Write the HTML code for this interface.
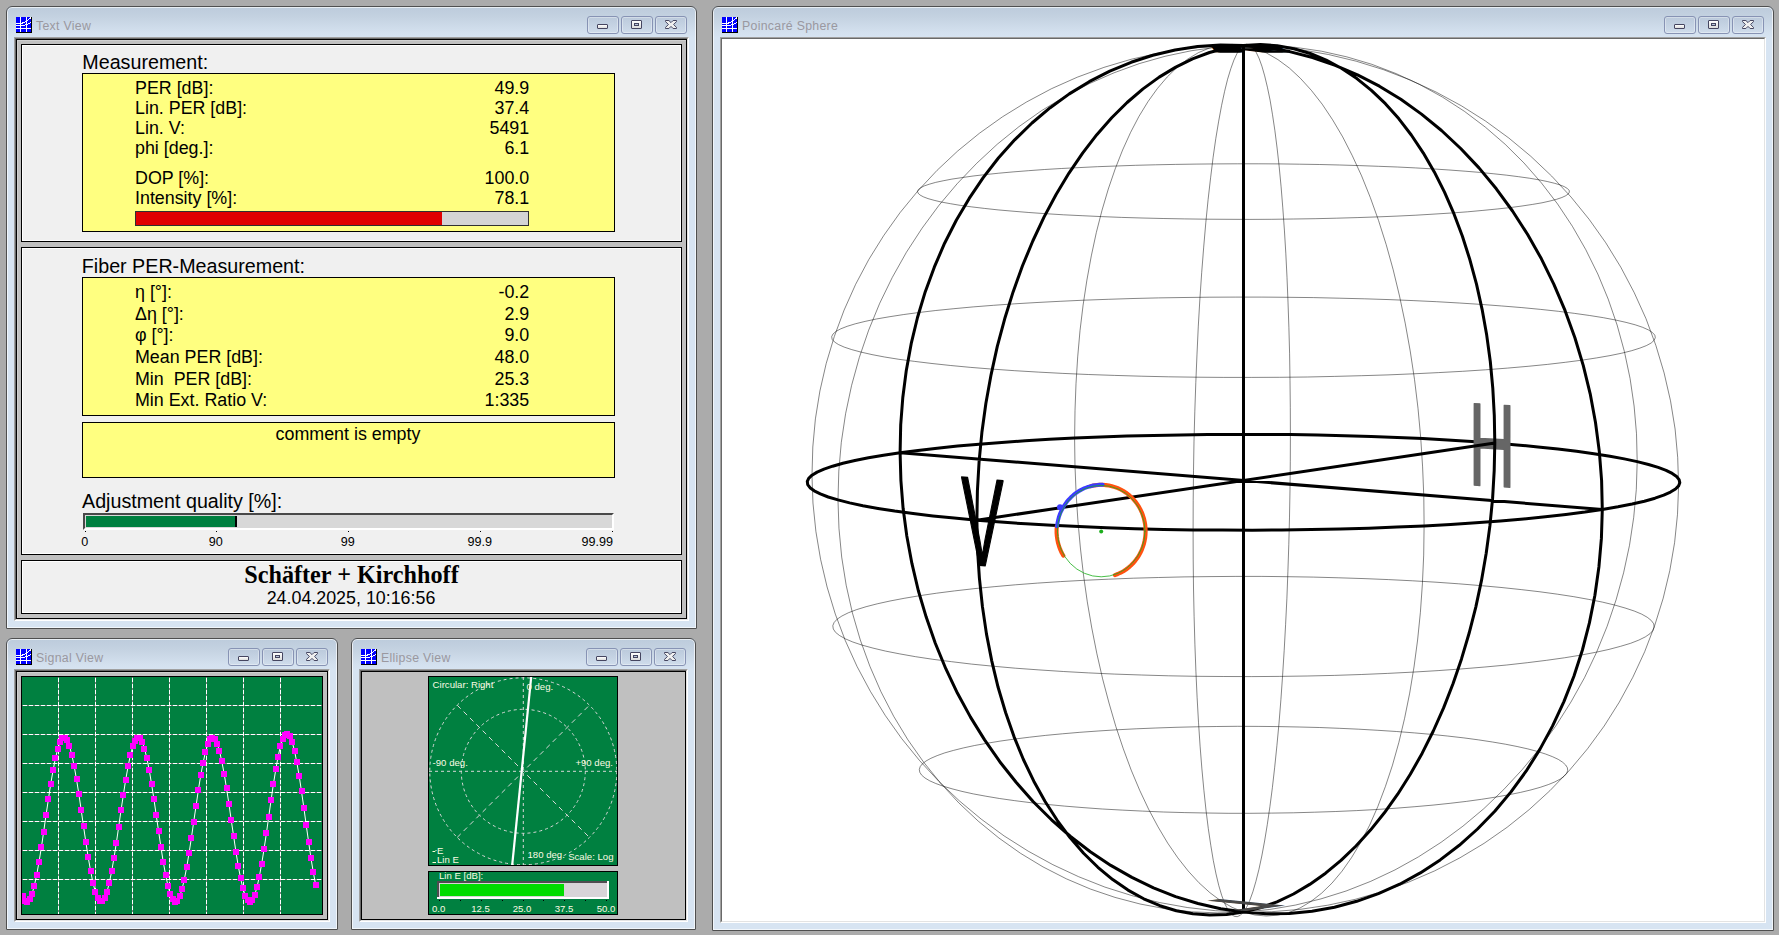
<!DOCTYPE html><html><head><meta charset="utf-8"><title>Polarization Analyzer</title><style>
html,body{margin:0;padding:0}
body{width:1779px;height:935px;overflow:hidden;background:#ababab;position:relative;font-family:"Liberation Sans",sans-serif;color:#000}
div,svg,i,b,span{position:absolute;box-sizing:border-box;display:block}
.win{background:linear-gradient(#bccbdb 0px,#c3d1e0 10px,#d3e0ee 26px,#d7e4f2 32px,#d7e4f2 100%);border-radius:6px 6px 0 0}
.frm{left:0;top:0;right:0;bottom:0;border:1px solid #4f4f4f;border-radius:6px 6px 0 0;box-shadow:inset 0 0 0 1px rgba(255,255,255,.66)}
.ico{left:10px;top:11px}
.ttl{left:30px;top:11px;height:18px;line-height:18px;font-size:12.3px;letter-spacing:.3px;color:#9a98a0;white-space:pre}
.cb{top:10px;width:32px;height:18px;border:1px solid #8793b4;border-radius:3px;background:linear-gradient(rgba(180,195,215,.55),rgba(200,213,230,.35));box-shadow:inset 0 0 0 1px rgba(255,255,255,.35)}
.gmin{left:9px;top:7px;width:11px;height:5px;border:1px solid #454560;border-radius:1px;background:linear-gradient(#fff,#dcdcdc)}
.gmax{left:9px;top:3px;width:11px;height:9px;border:1px solid #454560;border-radius:1px;background:linear-gradient(#fff,#dcdcdc)}
.gmax b{left:2px;top:2px;width:5px;height:3px;border:1px solid #454560;background:#b8c6da}
.gx{left:9px;top:3px}
.edge{left:8px;top:31px;right:8px;bottom:8px;border-style:solid;border-width:1px;border-color:#a0a0a0 #fff #fff #a0a0a0}
.client{left:0;top:0;right:0;bottom:0;border-style:solid;border-width:1px;border-color:#696969 #e3e3e3 #e3e3e3 #696969;overflow:hidden}
.inner{left:0;top:0;right:0;bottom:0;overflow:hidden}
.t{white-space:pre}
</style></head><body>
<div class="win " style="left:6px;top:6px;width:691px;height:623px">
<div class="frm"></div>
<svg class="ico" width="16" height="16" viewBox="0 0 16 16" shape-rendering="crispEdges"><rect width="16" height="16" fill="#00f"/><rect x="4" y="0" width="1" height="1" fill="#fff"/><rect x="10" y="0" width="1" height="1" fill="#fff"/><rect x="14" y="0" width="1" height="1" fill="#fff"/><rect x="15" y="0" width="1" height="1" fill="#000"/><rect x="4" y="1" width="1" height="1" fill="#fff"/><rect x="10" y="1" width="1" height="1" fill="#fff"/><rect x="13" y="1" width="2" height="1" fill="#fff"/><rect x="15" y="1" width="1" height="1" fill="#000"/><rect x="4" y="2" width="1" height="1" fill="#fff"/><rect x="10" y="2" width="1" height="1" fill="#fff"/><rect x="12" y="2" width="1" height="1" fill="#fff"/><rect x="15" y="2" width="1" height="1" fill="#000"/><rect x="4" y="3" width="1" height="1" fill="#fff"/><rect x="10" y="3" width="2" height="1" fill="#fff"/><rect x="15" y="3" width="1" height="1" fill="#000"/><rect x="4" y="4" width="1" height="1" fill="#fff"/><rect x="9" y="4" width="2" height="1" fill="#fff"/><rect x="15" y="4" width="1" height="1" fill="#000"/><rect x="4" y="5" width="1" height="1" fill="#fff"/><rect x="6" y="5" width="3" height="1" fill="#fff"/><rect x="10" y="5" width="1" height="1" fill="#fff"/><rect x="14" y="5" width="1" height="1" fill="#fff"/><rect x="15" y="5" width="1" height="1" fill="#000"/><rect x="0" y="6" width="7" height="1" fill="#fff"/><rect x="10" y="6" width="1" height="1" fill="#fff"/><rect x="12" y="6" width="2" height="1" fill="#fff"/><rect x="15" y="6" width="1" height="1" fill="#000"/><rect x="4" y="7" width="1" height="1" fill="#fff"/><rect x="9" y="7" width="3" height="1" fill="#fff"/><rect x="15" y="7" width="1" height="1" fill="#000"/><rect x="0" y="8" width="9" height="1" fill="#fff"/><rect x="10" y="8" width="1" height="1" fill="#fff"/><rect x="15" y="8" width="1" height="1" fill="#000"/><rect x="4" y="9" width="1" height="1" fill="#fff"/><rect x="10" y="9" width="1" height="1" fill="#fff"/><rect x="15" y="9" width="1" height="1" fill="#000"/><rect x="4" y="10" width="1" height="1" fill="#fff"/><rect x="10" y="10" width="1" height="1" fill="#fff"/><rect x="15" y="10" width="1" height="1" fill="#000"/><rect x="0" y="11" width="15" height="1" fill="#fff"/><rect x="15" y="11" width="1" height="1" fill="#000"/><rect x="4" y="12" width="1" height="1" fill="#fff"/><rect x="10" y="12" width="1" height="1" fill="#fff"/><rect x="15" y="12" width="1" height="1" fill="#000"/><rect x="4" y="13" width="1" height="1" fill="#fff"/><rect x="10" y="13" width="1" height="1" fill="#fff"/><rect x="15" y="13" width="1" height="1" fill="#000"/><rect x="4" y="14" width="1" height="1" fill="#fff"/><rect x="10" y="14" width="1" height="1" fill="#fff"/><rect x="15" y="14" width="1" height="1" fill="#000"/><rect x="0" y="15" width="16" height="1" fill="#000"/></svg>
<div class="ttl">Text View</div>
<div class="cb" style="right:78px"><i class="gmin"></i></div>
<div class="cb" style="right:44px"><i class="gmax"><b></b></i></div>
<div class="cb" style="right:10px"><svg class="gx" width="12" height="9" viewBox="0 0 12 9"><path d="M0.5 0.5H3.9L6 2.6L8.1 0.5H11.5V1.6L8.6 4.5L11.5 7.4V8.5H8.1L6 6.4L3.9 8.5H0.5V7.4L3.4 4.5L0.5 1.6Z" fill="#f0f0f0" stroke="#454560" stroke-width="1" stroke-linejoin="round"/></svg></div>
<div class="edge"><div class="client"><div class="inner" style="background:#c0c0c0;border:1px solid #000"></div><div style="left:1px;top:1px;width:1px;height:578px;background:#d0d0d0"></div><div style="left:1px;top:1px;width:669px;height:1px;background:#d0d0d0"></div><div style="left:5px;top:5px;width:661px;height:198px;background:#f0f0f0;border:1px solid #000;box-shadow:inset 0 0 0 1px #fff"></div><div style="left:5px;top:208px;width:661px;height:308px;background:#f0f0f0;border:1px solid #000;box-shadow:inset 0 0 0 1px #fff"></div><div style="left:5px;top:521px;width:661px;height:54px;background:#f0f0f0;border:1px solid #000;box-shadow:inset 0 0 0 1px #fff"></div><div style="left:66px;top:34px;width:533px;height:159px;background:#ffff80;border:1px solid #000"></div><div style="left:66px;top:238px;width:533px;height:139px;background:#ffff80;border:1px solid #000"></div><div style="left:66px;top:383px;width:533px;height:56px;background:#ffff80;border:1px solid #000"></div><div class="t" style="left:66.3px;top:12.17px;font-size:19.7px;line-height:22.64px;">Measurement:</div><div class="t" style="left:65.8px;top:216.17px;font-size:19.7px;line-height:22.64px;">Fiber PER-Measurement:</div><div class="t" style="left:66px;top:450.67px;font-size:19.7px;line-height:22.64px;">Adjustment quality [%]:</div><div class="t" style="left:119px;top:39.25px;font-size:17.85px;line-height:20.51px;">PER [dB]:</div><div class="t" style="right:157.79999999999995px;top:39.25px;font-size:17.85px;line-height:20.51px;text-align:right">49.9</div><div class="t" style="left:119px;top:59.25px;font-size:17.85px;line-height:20.51px;">Lin. PER [dB]:</div><div class="t" style="right:157.79999999999995px;top:59.25px;font-size:17.85px;line-height:20.51px;text-align:right">37.4</div><div class="t" style="left:119px;top:79.25px;font-size:17.85px;line-height:20.51px;">Lin. V:</div><div class="t" style="right:157.79999999999995px;top:79.25px;font-size:17.85px;line-height:20.51px;text-align:right">5491</div><div class="t" style="left:119px;top:99.25px;font-size:17.85px;line-height:20.51px;">phi [deg.]:</div><div class="t" style="right:157.79999999999995px;top:99.25px;font-size:17.85px;line-height:20.51px;text-align:right">6.1</div><div class="t" style="left:119px;top:129.25px;font-size:17.85px;line-height:20.51px;">DOP [%]:</div><div class="t" style="right:157.79999999999995px;top:129.25px;font-size:17.85px;line-height:20.51px;text-align:right">100.0</div><div class="t" style="left:119px;top:149.25px;font-size:17.85px;line-height:20.51px;">Intensity [%]:</div><div class="t" style="right:157.79999999999995px;top:149.25px;font-size:17.85px;line-height:20.51px;text-align:right">78.1</div><div class="t" style="left:119px;top:243.25px;font-size:17.85px;line-height:20.51px;">η [°]:</div><div class="t" style="right:157.79999999999995px;top:243.25px;font-size:17.85px;line-height:20.51px;text-align:right">-0.2</div><div class="t" style="left:119px;top:264.85px;font-size:17.85px;line-height:20.51px;">Δη [°]:</div><div class="t" style="right:157.79999999999995px;top:264.85px;font-size:17.85px;line-height:20.51px;text-align:right">2.9</div><div class="t" style="left:119px;top:286.45px;font-size:17.85px;line-height:20.51px;">φ [°]:</div><div class="t" style="right:157.79999999999995px;top:286.45px;font-size:17.85px;line-height:20.51px;text-align:right">9.0</div><div class="t" style="left:119px;top:308.05px;font-size:17.85px;line-height:20.51px;">Mean PER [dB]:</div><div class="t" style="right:157.79999999999995px;top:308.05px;font-size:17.85px;line-height:20.51px;text-align:right">48.0</div><div class="t" style="left:119px;top:329.65px;font-size:17.85px;line-height:20.51px;">Min  PER [dB]:</div><div class="t" style="right:157.79999999999995px;top:329.65px;font-size:17.85px;line-height:20.51px;text-align:right">25.3</div><div class="t" style="left:119px;top:351.25px;font-size:17.85px;line-height:20.51px;">Min Ext. Ratio V:</div><div class="t" style="right:157.79999999999995px;top:351.25px;font-size:17.85px;line-height:20.51px;text-align:right">1:335</div><div class="t" style="left:132px;width:400px;text-align:center;top:385.15px;font-size:17.85px;line-height:20.51px;">comment is empty</div><div style="left:119px;top:172px;width:394px;height:15px;background:#d4d4d4;border:1px solid #303030"></div><div style="left:120px;top:173px;width:306px;height:13px;background:#e00000"></div><div style="left:67px;top:474px;width:531px;height:17px;background:#d8d8d8;border-top:2px solid #484848;border-left:2px solid #484848;border-bottom:2px solid #fff;border-right:2px solid #fff"></div><div style="left:70px;top:477px;width:149px;height:11px;background:#008040"></div><div style="left:219px;top:477px;width:2px;height:11px;background:#000"></div><div style="left:69px;top:492px;width:1px;height:1px;background:#000"></div><div class="t" style="left:-131.3px;width:400px;text-align:center;top:496.10px;font-size:12.6px;line-height:14.48px;">0</div><div style="left:200px;top:492px;width:1px;height:1px;background:#000"></div><div class="t" style="left:-0.30000000000001137px;width:400px;text-align:center;top:496.10px;font-size:12.6px;line-height:14.48px;">90</div><div style="left:332px;top:492px;width:1px;height:1px;background:#000"></div><div class="t" style="left:131.7px;width:400px;text-align:center;top:496.10px;font-size:12.6px;line-height:14.48px;">99</div><div style="left:464px;top:492px;width:1px;height:1px;background:#000"></div><div class="t" style="left:263.7px;width:400px;text-align:center;top:496.10px;font-size:12.6px;line-height:14.48px;">99.9</div><div style="left:596px;top:492px;width:1px;height:1px;background:#000"></div><div class="t" style="right:74px;top:496.10px;font-size:12.6px;line-height:14.48px;text-align:right">99.99</div><div class="t" style="left:135.5px;width:400px;text-align:center;top:522.10px;font-size:24.2px;line-height:27.81px;font-family:'Liberation Serif',serif;font-weight:bold">Schäfter + Kirchhoff</div><div class="t" style="left:135px;width:400px;text-align:center;top:549.05px;font-size:17.85px;line-height:20.51px;">24.04.2025, 10:16:56</div></div></div>
</div>
<div class="win " style="left:6px;top:638px;width:332px;height:292px">
<div class="frm"></div>
<svg class="ico" width="16" height="16" viewBox="0 0 16 16" shape-rendering="crispEdges"><rect width="16" height="16" fill="#00f"/><rect x="4" y="0" width="1" height="1" fill="#fff"/><rect x="10" y="0" width="1" height="1" fill="#fff"/><rect x="14" y="0" width="1" height="1" fill="#fff"/><rect x="15" y="0" width="1" height="1" fill="#000"/><rect x="4" y="1" width="1" height="1" fill="#fff"/><rect x="10" y="1" width="1" height="1" fill="#fff"/><rect x="13" y="1" width="2" height="1" fill="#fff"/><rect x="15" y="1" width="1" height="1" fill="#000"/><rect x="4" y="2" width="1" height="1" fill="#fff"/><rect x="10" y="2" width="1" height="1" fill="#fff"/><rect x="12" y="2" width="1" height="1" fill="#fff"/><rect x="15" y="2" width="1" height="1" fill="#000"/><rect x="4" y="3" width="1" height="1" fill="#fff"/><rect x="10" y="3" width="2" height="1" fill="#fff"/><rect x="15" y="3" width="1" height="1" fill="#000"/><rect x="4" y="4" width="1" height="1" fill="#fff"/><rect x="9" y="4" width="2" height="1" fill="#fff"/><rect x="15" y="4" width="1" height="1" fill="#000"/><rect x="4" y="5" width="1" height="1" fill="#fff"/><rect x="6" y="5" width="3" height="1" fill="#fff"/><rect x="10" y="5" width="1" height="1" fill="#fff"/><rect x="14" y="5" width="1" height="1" fill="#fff"/><rect x="15" y="5" width="1" height="1" fill="#000"/><rect x="0" y="6" width="7" height="1" fill="#fff"/><rect x="10" y="6" width="1" height="1" fill="#fff"/><rect x="12" y="6" width="2" height="1" fill="#fff"/><rect x="15" y="6" width="1" height="1" fill="#000"/><rect x="4" y="7" width="1" height="1" fill="#fff"/><rect x="9" y="7" width="3" height="1" fill="#fff"/><rect x="15" y="7" width="1" height="1" fill="#000"/><rect x="0" y="8" width="9" height="1" fill="#fff"/><rect x="10" y="8" width="1" height="1" fill="#fff"/><rect x="15" y="8" width="1" height="1" fill="#000"/><rect x="4" y="9" width="1" height="1" fill="#fff"/><rect x="10" y="9" width="1" height="1" fill="#fff"/><rect x="15" y="9" width="1" height="1" fill="#000"/><rect x="4" y="10" width="1" height="1" fill="#fff"/><rect x="10" y="10" width="1" height="1" fill="#fff"/><rect x="15" y="10" width="1" height="1" fill="#000"/><rect x="0" y="11" width="15" height="1" fill="#fff"/><rect x="15" y="11" width="1" height="1" fill="#000"/><rect x="4" y="12" width="1" height="1" fill="#fff"/><rect x="10" y="12" width="1" height="1" fill="#fff"/><rect x="15" y="12" width="1" height="1" fill="#000"/><rect x="4" y="13" width="1" height="1" fill="#fff"/><rect x="10" y="13" width="1" height="1" fill="#fff"/><rect x="15" y="13" width="1" height="1" fill="#000"/><rect x="4" y="14" width="1" height="1" fill="#fff"/><rect x="10" y="14" width="1" height="1" fill="#fff"/><rect x="15" y="14" width="1" height="1" fill="#000"/><rect x="0" y="15" width="16" height="1" fill="#000"/></svg>
<div class="ttl">Signal View</div>
<div class="cb" style="right:78px"><i class="gmin"></i></div>
<div class="cb" style="right:44px"><i class="gmax"><b></b></i></div>
<div class="cb" style="right:10px"><svg class="gx" width="12" height="9" viewBox="0 0 12 9"><path d="M0.5 0.5H3.9L6 2.6L8.1 0.5H11.5V1.6L8.6 4.5L11.5 7.4V8.5H8.1L6 6.4L3.9 8.5H0.5V7.4L3.4 4.5L0.5 1.6Z" fill="#f0f0f0" stroke="#454560" stroke-width="1" stroke-linejoin="round"/></svg></div>
<div class="edge"><div class="client"><div class="inner" style="background:#c0c0c0;border:1px solid #000"></div><div style="left:1px;top:1px;width:1px;height:247px;background:#d0d0d0"></div><div style="left:1px;top:1px;width:310px;height:1px;background:#d0d0d0"></div><svg style="left:5px;top:5px" width="302" height="239" viewBox="21 676 302 239"><rect x="21.5" y="676.5" width="301" height="238" fill="#008040" stroke="#000" stroke-width="1"/><path d="M58.5 677V914M95.5 677V914M132.5 677V914M169.5 677V914M206.5 677V914M243.5 677V914M280.5 677V914M22 705.5H322M22 734.5H322M22 763.5H322M22 792.5H322M22 821.5H322M22 850.5H322M22 879.5H322" stroke="#808080" stroke-width="1" fill="none" shape-rendering="crispEdges"/><path d="M58.5 677V914M95.5 677V914M132.5 677V914M169.5 677V914M206.5 677V914M243.5 677V914M280.5 677V914M22 705.5H322M22 734.5H322M22 763.5H322M22 792.5H322M22 821.5H322M22 850.5H322M22 879.5H322" stroke="#fff" stroke-width="1" fill="none" stroke-dasharray="4 2" stroke-dashoffset="5" shape-rendering="crispEdges"/><clipPath id="pc"><rect x="22" y="677" width="300" height="237"/></clipPath><g clip-path="url(#pc)"><polyline fill="none" stroke="#fff" stroke-width="1" points="22.6,896.4 24.9,900.5 27.3,901.5 29.6,899.3 32.0,894.0 34.3,885.8 36.7,874.9 39.0,861.9 41.4,847.3 43.7,831.5 46.0,815.3 48.4,799.3 50.7,784.0 53.1,770.2 55.4,758.3 57.8,748.8 60.1,742.0 62.4,738.3 64.8,737.8 67.1,740.5 69.5,746.2 71.8,754.9 74.2,766.1 76.5,779.4 78.9,794.2 81.2,810.1 83.5,826.3 85.9,842.3 88.2,857.3 90.6,870.9 92.9,882.5 95.3,891.7 97.6,897.9 100.0,901.2 102.3,901.2 104.6,898.1 107.0,891.8 109.3,882.8 111.7,871.2 114.0,857.7 116.4,842.6 118.7,826.7 121.0,810.4 123.4,794.6 125.7,779.7 128.1,766.4 130.4,755.1 132.8,746.4 135.1,740.6 137.5,737.8 139.8,738.3 142.1,741.9 144.5,748.6 146.8,758.0 149.2,769.9 151.5,783.7 153.9,798.9 156.2,815.0 158.6,831.2 160.9,846.9 163.2,861.6 165.6,874.7 167.9,885.6 170.3,893.9 172.6,899.3 175.0,901.5 177.3,900.6 179.6,896.5 182.0,889.4 184.3,879.5 186.7,867.3 189.0,853.3 191.4,837.9 193.7,821.8 196.1,805.6 198.4,789.9 200.7,775.5 203.1,762.7 205.4,752.2 207.8,744.3 210.1,739.4 212.5,737.6 214.8,739.0 217.2,743.6 219.5,751.2 221.8,761.4 224.2,773.9 226.5,788.2 228.9,803.7 231.2,819.9 233.6,836.0 235.9,851.5 238.2,865.8 240.6,878.2 242.9,888.4 245.3,895.9 247.6,900.4 250.0,901.7 252.3,899.9 254.7,895.0 257.0,887.1 259.3,876.6 261.7,863.9 264.0,849.3 266.4,833.4 268.7,816.8 271.1,800.1 273.4,784.1 275.8,769.4 278.1,756.6 280.4,746.3 282.8,738.9 285.1,734.6 287.5,733.8 289.8,736.2 292.2,742.0 294.5,750.8 296.8,762.3 299.2,776.0 301.5,791.5 303.9,808.0 306.2,825.0 308.6,841.8 310.9,857.8 313.3,872.2 315.6,884.6"/><path fill="#f0f" shape-rendering="crispEdges" d="M20 893h6v6h-6zM22 898h6v6h-6zM24 899h6v6h-6zM27 896h6v6h-6zM29 891h6v6h-6zM31 883h6v6h-6zM34 872h6v6h-6zM36 859h6v6h-6zM38 844h6v6h-6zM41 829h6v6h-6zM43 812h6v6h-6zM45 796h6v6h-6zM48 781h6v6h-6zM50 767h6v6h-6zM52 755h6v6h-6zM55 746h6v6h-6zM57 739h6v6h-6zM59 735h6v6h-6zM62 735h6v6h-6zM64 737h6v6h-6zM66 743h6v6h-6zM69 752h6v6h-6zM71 763h6v6h-6zM74 776h6v6h-6zM76 791h6v6h-6zM78 807h6v6h-6zM81 823h6v6h-6zM83 839h6v6h-6zM85 854h6v6h-6zM88 868h6v6h-6zM90 880h6v6h-6zM92 889h6v6h-6zM95 895h6v6h-6zM97 898h6v6h-6zM99 898h6v6h-6zM102 895h6v6h-6zM104 889h6v6h-6zM106 880h6v6h-6zM109 868h6v6h-6zM111 855h6v6h-6zM113 840h6v6h-6zM116 824h6v6h-6zM118 807h6v6h-6zM120 792h6v6h-6zM123 777h6v6h-6zM125 763h6v6h-6zM127 752h6v6h-6zM130 743h6v6h-6zM132 738h6v6h-6zM134 735h6v6h-6zM137 735h6v6h-6zM139 739h6v6h-6zM141 746h6v6h-6zM144 755h6v6h-6zM146 767h6v6h-6zM149 781h6v6h-6zM151 796h6v6h-6zM153 812h6v6h-6zM156 828h6v6h-6zM158 844h6v6h-6zM160 859h6v6h-6zM163 872h6v6h-6zM165 883h6v6h-6zM167 891h6v6h-6zM170 896h6v6h-6zM172 899h6v6h-6zM174 898h6v6h-6zM177 893h6v6h-6zM179 886h6v6h-6zM181 877h6v6h-6zM184 864h6v6h-6zM186 850h6v6h-6zM188 835h6v6h-6zM191 819h6v6h-6zM193 803h6v6h-6zM195 787h6v6h-6zM198 772h6v6h-6zM200 760h6v6h-6zM202 749h6v6h-6zM205 741h6v6h-6zM207 736h6v6h-6zM209 735h6v6h-6zM212 736h6v6h-6zM214 741h6v6h-6zM216 748h6v6h-6zM219 758h6v6h-6zM221 771h6v6h-6zM224 785h6v6h-6zM226 801h6v6h-6zM228 817h6v6h-6zM231 833h6v6h-6zM233 849h6v6h-6zM235 863h6v6h-6zM238 875h6v6h-6zM240 885h6v6h-6zM242 893h6v6h-6zM245 897h6v6h-6zM247 899h6v6h-6zM249 897h6v6h-6zM252 892h6v6h-6zM254 884h6v6h-6zM256 874h6v6h-6zM259 861h6v6h-6zM261 846h6v6h-6zM263 830h6v6h-6zM266 814h6v6h-6zM268 797h6v6h-6zM270 781h6v6h-6zM273 766h6v6h-6zM275 754h6v6h-6zM277 743h6v6h-6zM280 736h6v6h-6zM282 732h6v6h-6zM284 731h6v6h-6zM287 733h6v6h-6zM289 739h6v6h-6zM292 748h6v6h-6zM294 759h6v6h-6zM296 773h6v6h-6zM299 788h6v6h-6zM301 805h6v6h-6zM303 822h6v6h-6zM306 839h6v6h-6zM308 855h6v6h-6zM310 869h6v6h-6zM313 882h6v6h-6z"/></g></svg></div></div>
</div>
<div class="win " style="left:351px;top:638px;width:345px;height:292px">
<div class="frm"></div>
<svg class="ico" width="16" height="16" viewBox="0 0 16 16" shape-rendering="crispEdges"><rect width="16" height="16" fill="#00f"/><rect x="4" y="0" width="1" height="1" fill="#fff"/><rect x="10" y="0" width="1" height="1" fill="#fff"/><rect x="14" y="0" width="1" height="1" fill="#fff"/><rect x="15" y="0" width="1" height="1" fill="#000"/><rect x="4" y="1" width="1" height="1" fill="#fff"/><rect x="10" y="1" width="1" height="1" fill="#fff"/><rect x="13" y="1" width="2" height="1" fill="#fff"/><rect x="15" y="1" width="1" height="1" fill="#000"/><rect x="4" y="2" width="1" height="1" fill="#fff"/><rect x="10" y="2" width="1" height="1" fill="#fff"/><rect x="12" y="2" width="1" height="1" fill="#fff"/><rect x="15" y="2" width="1" height="1" fill="#000"/><rect x="4" y="3" width="1" height="1" fill="#fff"/><rect x="10" y="3" width="2" height="1" fill="#fff"/><rect x="15" y="3" width="1" height="1" fill="#000"/><rect x="4" y="4" width="1" height="1" fill="#fff"/><rect x="9" y="4" width="2" height="1" fill="#fff"/><rect x="15" y="4" width="1" height="1" fill="#000"/><rect x="4" y="5" width="1" height="1" fill="#fff"/><rect x="6" y="5" width="3" height="1" fill="#fff"/><rect x="10" y="5" width="1" height="1" fill="#fff"/><rect x="14" y="5" width="1" height="1" fill="#fff"/><rect x="15" y="5" width="1" height="1" fill="#000"/><rect x="0" y="6" width="7" height="1" fill="#fff"/><rect x="10" y="6" width="1" height="1" fill="#fff"/><rect x="12" y="6" width="2" height="1" fill="#fff"/><rect x="15" y="6" width="1" height="1" fill="#000"/><rect x="4" y="7" width="1" height="1" fill="#fff"/><rect x="9" y="7" width="3" height="1" fill="#fff"/><rect x="15" y="7" width="1" height="1" fill="#000"/><rect x="0" y="8" width="9" height="1" fill="#fff"/><rect x="10" y="8" width="1" height="1" fill="#fff"/><rect x="15" y="8" width="1" height="1" fill="#000"/><rect x="4" y="9" width="1" height="1" fill="#fff"/><rect x="10" y="9" width="1" height="1" fill="#fff"/><rect x="15" y="9" width="1" height="1" fill="#000"/><rect x="4" y="10" width="1" height="1" fill="#fff"/><rect x="10" y="10" width="1" height="1" fill="#fff"/><rect x="15" y="10" width="1" height="1" fill="#000"/><rect x="0" y="11" width="15" height="1" fill="#fff"/><rect x="15" y="11" width="1" height="1" fill="#000"/><rect x="4" y="12" width="1" height="1" fill="#fff"/><rect x="10" y="12" width="1" height="1" fill="#fff"/><rect x="15" y="12" width="1" height="1" fill="#000"/><rect x="4" y="13" width="1" height="1" fill="#fff"/><rect x="10" y="13" width="1" height="1" fill="#fff"/><rect x="15" y="13" width="1" height="1" fill="#000"/><rect x="4" y="14" width="1" height="1" fill="#fff"/><rect x="10" y="14" width="1" height="1" fill="#fff"/><rect x="15" y="14" width="1" height="1" fill="#000"/><rect x="0" y="15" width="16" height="1" fill="#000"/></svg>
<div class="ttl">Ellipse View</div>
<div class="cb" style="right:78px"><i class="gmin"></i></div>
<div class="cb" style="right:44px"><i class="gmax"><b></b></i></div>
<div class="cb" style="right:10px"><svg class="gx" width="12" height="9" viewBox="0 0 12 9"><path d="M0.5 0.5H3.9L6 2.6L8.1 0.5H11.5V1.6L8.6 4.5L11.5 7.4V8.5H8.1L6 6.4L3.9 8.5H0.5V7.4L3.4 4.5L0.5 1.6Z" fill="#f0f0f0" stroke="#454560" stroke-width="1" stroke-linejoin="round"/></svg></div>
<div class="edge"><div class="client"><div class="inner" style="background:#c0c0c0;border:1px solid #000"></div><svg style="left:0;top:0" width="325" height="249" viewBox="361 671 325 249" font-family="Liberation Sans, sans-serif" font-size="9.6"><rect x="428.5" y="676.5" width="189" height="189" fill="#008040" stroke="#000"/><rect x="428.5" y="871.5" width="189" height="43" fill="#008040" stroke="#000"/><clipPath id="ec"><rect x="429" y="677" width="188" height="188"/></clipPath><g clip-path="url(#ec)" fill="none" stroke="#d8d8d8" stroke-width="1" stroke-dasharray="3 3"><circle cx="523.3" cy="771.3" r="93.5"/><circle cx="523.3" cy="771.3" r="62"/><path d="M429 771.3H617M523.3 677V865"/><path d="M457.2 705.2L589.4 837.4M457.2 837.4L589.4 705.2" stroke-dasharray="5 4"/></g><g clip-path="url(#ec)"><path d="M531.3 676L512.2 865" stroke="#fff" stroke-width="2.2" fill="none"/></g><g fill="#fbfbe4"><text x="432.6" y="688">Circular: Right</text><text x="526.5" y="689.6">0 deg.</text><text x="432.6" y="765.8">-90 deg.</text><text x="613" y="765.8" text-anchor="end">+90 deg.</text><text x="527.5" y="857.6">180 deg.</text><text x="613.5" y="859.5" text-anchor="end">Scale: Log</text><text x="437" y="853.5">E</text><text x="437" y="862.8">Lin E</text><text x="439" y="879.4">Lin E [dB]:</text><text x="438.7" y="911.6" text-anchor="middle">0.0</text><text x="480.5" y="911.6" text-anchor="middle">12.5</text><text x="522" y="911.6" text-anchor="middle">25.0</text><text x="564" y="911.6" text-anchor="middle">37.5</text><text x="606" y="911.6" text-anchor="middle">50.0</text></g><path d="M432.5 851.5h2.5l1.5 -1.5M432.5 862.5h3.5" stroke="#ffffd8" stroke-width="1" fill="none"/><g shape-rendering="crispEdges"><rect x="437" y="881" width="172" height="18" fill="#fff"/><rect x="437" y="881" width="170" height="16" fill="#504c50"/><rect x="439" y="883" width="168" height="14" fill="#d8d4d8"/><rect x="440" y="884" width="124" height="12" fill="#00dc00"/><rect x="439" y="900" width="1" height="1" fill="#000"/><rect x="460" y="900" width="1" height="1" fill="#000"/><rect x="481" y="900" width="1" height="1" fill="#000"/><rect x="502" y="900" width="1" height="1" fill="#000"/><rect x="523" y="900" width="1" height="1" fill="#000"/><rect x="543" y="900" width="1" height="1" fill="#000"/><rect x="564" y="900" width="1" height="1" fill="#000"/><rect x="585" y="900" width="1" height="1" fill="#000"/><rect x="606" y="900" width="1" height="1" fill="#000"/></g></svg></div></div>
</div>
<div class="win " style="left:712px;top:6px;width:1062px;height:925px">
<div class="frm"></div>
<svg class="ico" width="16" height="16" viewBox="0 0 16 16" shape-rendering="crispEdges"><rect width="16" height="16" fill="#00f"/><rect x="4" y="0" width="1" height="1" fill="#fff"/><rect x="10" y="0" width="1" height="1" fill="#fff"/><rect x="14" y="0" width="1" height="1" fill="#fff"/><rect x="15" y="0" width="1" height="1" fill="#000"/><rect x="4" y="1" width="1" height="1" fill="#fff"/><rect x="10" y="1" width="1" height="1" fill="#fff"/><rect x="13" y="1" width="2" height="1" fill="#fff"/><rect x="15" y="1" width="1" height="1" fill="#000"/><rect x="4" y="2" width="1" height="1" fill="#fff"/><rect x="10" y="2" width="1" height="1" fill="#fff"/><rect x="12" y="2" width="1" height="1" fill="#fff"/><rect x="15" y="2" width="1" height="1" fill="#000"/><rect x="4" y="3" width="1" height="1" fill="#fff"/><rect x="10" y="3" width="2" height="1" fill="#fff"/><rect x="15" y="3" width="1" height="1" fill="#000"/><rect x="4" y="4" width="1" height="1" fill="#fff"/><rect x="9" y="4" width="2" height="1" fill="#fff"/><rect x="15" y="4" width="1" height="1" fill="#000"/><rect x="4" y="5" width="1" height="1" fill="#fff"/><rect x="6" y="5" width="3" height="1" fill="#fff"/><rect x="10" y="5" width="1" height="1" fill="#fff"/><rect x="14" y="5" width="1" height="1" fill="#fff"/><rect x="15" y="5" width="1" height="1" fill="#000"/><rect x="0" y="6" width="7" height="1" fill="#fff"/><rect x="10" y="6" width="1" height="1" fill="#fff"/><rect x="12" y="6" width="2" height="1" fill="#fff"/><rect x="15" y="6" width="1" height="1" fill="#000"/><rect x="4" y="7" width="1" height="1" fill="#fff"/><rect x="9" y="7" width="3" height="1" fill="#fff"/><rect x="15" y="7" width="1" height="1" fill="#000"/><rect x="0" y="8" width="9" height="1" fill="#fff"/><rect x="10" y="8" width="1" height="1" fill="#fff"/><rect x="15" y="8" width="1" height="1" fill="#000"/><rect x="4" y="9" width="1" height="1" fill="#fff"/><rect x="10" y="9" width="1" height="1" fill="#fff"/><rect x="15" y="9" width="1" height="1" fill="#000"/><rect x="4" y="10" width="1" height="1" fill="#fff"/><rect x="10" y="10" width="1" height="1" fill="#fff"/><rect x="15" y="10" width="1" height="1" fill="#000"/><rect x="0" y="11" width="15" height="1" fill="#fff"/><rect x="15" y="11" width="1" height="1" fill="#000"/><rect x="4" y="12" width="1" height="1" fill="#fff"/><rect x="10" y="12" width="1" height="1" fill="#fff"/><rect x="15" y="12" width="1" height="1" fill="#000"/><rect x="4" y="13" width="1" height="1" fill="#fff"/><rect x="10" y="13" width="1" height="1" fill="#fff"/><rect x="15" y="13" width="1" height="1" fill="#000"/><rect x="4" y="14" width="1" height="1" fill="#fff"/><rect x="10" y="14" width="1" height="1" fill="#fff"/><rect x="15" y="14" width="1" height="1" fill="#000"/><rect x="0" y="15" width="16" height="1" fill="#000"/></svg>
<div class="ttl">Poincaré Sphere</div>
<div class="cb" style="right:78px"><i class="gmin"></i></div>
<div class="cb" style="right:44px"><i class="gmax"><b></b></i></div>
<div class="cb" style="right:10px"><svg class="gx" width="12" height="9" viewBox="0 0 12 9"><path d="M0.5 0.5H3.9L6 2.6L8.1 0.5H11.5V1.6L8.6 4.5L11.5 7.4V8.5H8.1L6 6.4L3.9 8.5H0.5V7.4L3.4 4.5L0.5 1.6Z" fill="#f0f0f0" stroke="#454560" stroke-width="1" stroke-linejoin="round"/></svg></div>
<div class="edge"><div class="client"><div class="inner" style="background:#fff"></div><svg style="left:0;top:0" width="1042" height="882" viewBox="722 39 1042 882" fill="none" stroke-linejoin="round" stroke-linecap="round"><path d="M1290.4 434.6L1290.3 407.4L1290.0 380.4L1289.6 353.8L1288.9 327.7L1288.0 302.1L1287.0 277.3L1285.8 253.2L1284.4 230.1L1282.8 207.9L1281.1 186.8L1279.2 166.8L1277.1 148.1L1274.9 130.7L1272.5 114.7L1270.1 100.2L1267.4 87.2L1264.7 75.9L1261.9 66.2L1259.0 58.2L1256.0 52.0L1253.0 47.5L1249.8 45.0L1246.7 44.2L1243.5 45.4L1240.3 48.4L1237.1 53.3L1233.9 60.1L1230.8 68.7L1227.6 79.2L1224.6 91.4L1221.6 105.4L1218.7 121.1L1215.8 138.5L1213.1 157.4L1210.6 177.8L1208.1 199.6L1205.8 222.7L1203.7 247.1L1201.7 272.5L1199.9 298.9L1198.3 326.1L1197.0 354.1L1195.8 382.7L1194.8 411.8L1194.0 441.1L1193.5 470.7L1193.2 500.3L1193.1 529.9L1193.2 559.1L1193.5 588.0L1194.1 616.4L1194.9 644.2L1195.9 671.2L1197.1 697.3L1198.5 722.3L1200.1 746.2L1201.9 768.9L1203.9 790.3L1206.0 810.2L1208.3 828.6L1210.8 845.4L1213.3 860.5L1216.0 873.9L1218.8 885.6L1221.7 895.4L1224.7 903.4L1227.8 909.5L1230.9 913.8L1234.0 916.2L1237.2 916.7L1240.3 915.3L1243.5 912.1L1246.7 907.1L1249.8 900.3L1252.9 891.7L1255.9 881.4L1258.9 869.5L1261.8 856.0L1264.6 841.0L1267.3 824.5L1269.9 806.7L1272.4 787.5L1274.7 767.2L1276.9 745.7L1279.0 723.2L1280.9 699.7L1282.6 675.4L1284.2 650.3L1285.6 624.5L1286.9 598.3L1287.9 571.5L1288.8 544.4L1289.5 517.1L1290.0 489.6L1290.3 462.1ZM1074.6 438.1L1075.0 410.7L1076.0 383.7L1077.7 356.9L1080.0 330.7L1083.1 305.1L1086.9 280.1L1091.3 255.9L1096.3 232.6L1102.0 210.3L1108.3 189.0L1115.2 168.9L1122.6 150.0L1130.6 132.4L1139.0 116.3L1148.0 101.6L1157.4 88.5L1167.2 77.0L1177.3 67.1L1187.8 59.0L1198.5 52.6L1209.5 48.0L1220.7 45.3L1232.1 44.4L1243.5 45.4L1255.0 48.2L1266.5 53.0L1277.9 59.6L1289.3 68.0L1300.4 78.3L1311.4 90.4L1322.2 104.2L1332.6 119.8L1342.7 136.9L1352.3 155.7L1361.6 175.9L1370.3 197.5L1378.5 220.4L1386.2 244.6L1393.2 269.8L1399.5 296.0L1405.2 323.1L1410.2 350.9L1414.5 379.4L1418.0 408.3L1420.7 437.5L1422.6 466.9L1423.8 496.4L1424.1 525.9L1423.7 555.1L1422.4 583.9L1420.4 612.3L1417.6 640.0L1414.0 667.0L1409.7 693.1L1404.6 718.3L1398.9 742.3L1392.5 765.1L1385.4 786.5L1377.8 806.6L1369.6 825.2L1360.8 842.2L1351.6 857.5L1342.0 871.2L1332.0 883.1L1321.6 893.2L1310.9 901.5L1300.0 908.0L1288.9 912.5L1277.6 915.2L1266.3 916.0L1254.9 915.0L1243.5 912.1L1232.2 907.4L1220.9 900.9L1209.8 892.6L1198.9 882.7L1188.2 871.0L1177.8 857.8L1167.7 843.1L1158.0 826.8L1148.6 809.2L1139.7 790.3L1131.2 770.1L1123.3 748.8L1115.8 726.4L1109.0 703.0L1102.6 678.8L1096.9 653.8L1091.8 628.1L1087.3 601.9L1083.5 575.1L1080.4 548.0L1077.9 520.7L1076.1 493.2L1075.0 465.6ZM812.0 475.2L812.8 447.0L815.4 418.9L819.9 391.0L826.2 363.5L834.3 336.5L844.1 310.1L855.6 284.4L868.8 259.5L883.7 235.6L900.0 212.7L917.9 190.9L937.1 170.3L957.7 151.0L979.5 133.2L1002.5 116.8L1026.5 102.0L1051.5 88.7L1077.3 77.2L1103.9 67.4L1131.0 59.3L1158.7 53.1L1186.7 48.6L1215.1 46.1L1243.5 45.4L1272.0 46.5L1300.3 49.6L1328.4 54.5L1356.2 61.2L1383.5 69.7L1410.2 80.0L1436.2 92.1L1461.4 105.8L1485.6 121.1L1508.8 138.0L1530.8 156.3L1551.7 176.1L1571.1 197.1L1589.2 219.4L1605.8 242.8L1620.8 267.2L1634.2 292.6L1646.0 318.7L1655.9 345.5L1664.1 372.9L1670.5 400.8L1675.1 429.0L1677.7 457.4L1678.6 485.9L1677.5 514.3L1674.6 542.6L1669.8 570.6L1663.2 598.2L1654.8 625.2L1644.7 651.7L1632.8 677.3L1619.3 702.1L1604.2 726.0L1587.5 748.8L1569.4 770.4L1549.9 790.7L1529.1 809.7L1507.1 827.3L1484.0 843.4L1459.8 857.9L1434.8 870.8L1408.9 882.0L1382.4 891.5L1355.3 899.3L1327.8 905.2L1299.9 909.4L1271.7 911.7L1243.5 912.1L1215.3 910.7L1187.2 907.5L1159.4 902.5L1131.9 895.6L1104.9 887.1L1078.6 876.7L1052.9 864.7L1028.1 851.1L1004.1 835.9L981.2 819.1L959.5 801.0L938.9 781.4L919.6 760.6L901.7 738.6L885.3 715.5L870.4 691.4L857.0 666.4L845.3 640.6L835.3 614.1L827.1 587.0L820.6 559.4L815.9 531.5L813.0 503.4ZM838.0 499.9L838.8 471.1L841.3 442.3L845.6 413.7L851.6 385.4L859.3 357.5L868.7 330.1L879.7 303.3L892.3 277.4L906.4 252.3L922.0 228.3L938.9 205.4L957.2 183.7L976.7 163.3L997.3 144.2L1018.9 126.7L1041.5 110.7L1065.0 96.4L1089.2 83.7L1114.0 72.8L1139.3 63.6L1165.0 56.3L1191.0 50.8L1217.2 47.1L1243.5 45.4L1269.7 45.5L1295.8 47.4L1321.5 51.2L1346.9 56.9L1371.8 64.3L1396.1 73.6L1419.7 84.5L1442.5 97.1L1464.4 111.3L1485.3 127.1L1505.2 144.3L1523.9 162.9L1541.4 182.9L1557.6 204.0L1572.4 226.3L1585.8 249.7L1597.8 274.0L1608.2 299.1L1617.1 325.0L1624.4 351.5L1630.1 378.6L1634.1 406.0L1636.5 433.7L1637.2 461.6L1636.3 489.6L1633.7 517.5L1629.5 545.3L1623.6 572.8L1616.1 599.8L1607.1 626.4L1596.5 652.4L1584.5 677.7L1570.9 702.1L1556.0 725.6L1539.8 748.2L1522.3 769.5L1503.6 789.7L1483.8 808.7L1462.9 826.2L1441.1 842.3L1418.4 856.9L1395.0 869.9L1370.8 881.3L1346.1 891.0L1320.9 898.9L1295.3 905.1L1269.5 909.5L1243.5 912.1L1217.4 912.9L1191.5 911.8L1165.6 908.8L1140.1 904.0L1115.0 897.4L1090.3 889.0L1066.3 878.8L1043.0 866.9L1020.5 853.3L998.9 838.0L978.3 821.2L958.8 802.9L940.6 783.2L923.6 762.1L907.9 739.8L893.7 716.3L881.0 691.8L869.9 666.3L860.3 640.0L852.4 612.9L846.2 585.3L841.7 557.1L839.0 528.7ZM1431.7 734.4L1414.4 732.9L1396.5 731.5L1377.9 730.3L1358.8 729.2L1339.3 728.3L1319.3 727.5L1299.1 727.0L1278.7 726.6L1258.1 726.4L1237.4 726.3L1216.8 726.5L1196.3 726.8L1176.0 727.3L1155.9 728.0L1136.2 728.8L1116.9 729.8L1098.1 731.0L1079.9 732.3L1062.4 733.8L1045.5 735.4L1029.5 737.2L1014.3 739.1L1000.1 741.1L986.8 743.3L974.6 745.5L963.5 747.9L953.5 750.4L944.7 752.9L937.2 755.6L930.9 758.3L926.0 761.0L922.4 763.8L920.2 766.6L919.3 769.5L919.8 772.3L921.7 775.2L925.0 778.0L929.7 780.8L935.8 783.5L943.2 786.2L952.0 788.8L962.0 791.4L973.3 793.9L985.8 796.2L999.5 798.5L1014.3 800.6L1030.1 802.6L1046.8 804.4L1064.5 806.1L1083.0 807.6L1102.3 809.0L1122.2 810.1L1142.6 811.1L1163.5 812.0L1184.8 812.6L1206.4 813.0L1228.1 813.3L1249.9 813.3L1271.7 813.1L1293.3 812.8L1314.7 812.2L1335.8 811.5L1356.5 810.6L1376.6 809.5L1396.1 808.2L1414.9 806.7L1433.0 805.1L1450.1 803.3L1466.3 801.4L1481.5 799.3L1495.7 797.1L1508.7 794.8L1520.5 792.4L1531.0 789.9L1540.3 787.3L1548.3 784.6L1554.9 781.9L1560.2 779.1L1564.1 776.3L1566.6 773.5L1567.7 770.6L1567.4 767.8L1565.7 765.0L1562.6 762.2L1558.3 759.4L1552.5 756.7L1545.5 754.0L1537.3 751.4L1527.8 748.9L1517.1 746.5L1505.4 744.2L1492.5 742.0L1478.7 739.9L1463.9 737.9L1448.2 736.1ZM1480.5 585.6L1458.7 583.8L1436.0 582.2L1412.7 580.8L1388.6 579.6L1364.0 578.6L1338.9 577.8L1313.5 577.1L1287.7 576.7L1261.8 576.4L1235.9 576.4L1210.0 576.6L1184.1 576.9L1158.6 577.5L1133.3 578.2L1108.5 579.2L1084.2 580.3L1060.5 581.6L1037.6 583.1L1015.4 584.8L994.1 586.7L973.9 588.7L954.6 590.9L936.6 593.2L919.7 595.7L904.2 598.3L890.0 601.0L877.3 603.8L866.1 606.7L856.4 609.7L848.3 612.8L841.9 616.0L837.1 619.2L834.1 622.5L832.8 625.7L833.3 629.0L835.5 632.3L839.5 635.5L845.3 638.8L852.8 642.0L862.0 645.1L873.0 648.1L885.6 651.1L899.8 653.9L915.6 656.7L932.9 659.3L951.6 661.7L971.6 664.1L992.9 666.2L1015.4 668.2L1038.9 669.9L1063.4 671.5L1088.7 672.9L1114.8 674.1L1141.5 675.0L1168.6 675.8L1196.1 676.3L1223.8 676.5L1251.7 676.6L1279.4 676.4L1307.1 676.0L1334.4 675.4L1361.3 674.5L1387.6 673.4L1413.2 672.1L1438.1 670.6L1462.0 668.9L1484.9 667.0L1506.7 665.0L1527.3 662.7L1546.6 660.3L1564.4 657.8L1580.9 655.1L1595.7 652.3L1609.0 649.4L1620.6 646.3L1630.6 643.3L1638.8 640.1L1645.3 636.9L1650.1 633.6L1653.0 630.4L1654.2 627.1L1653.7 623.8L1651.3 620.5L1647.3 617.3L1641.6 614.1L1634.2 611.0L1625.1 608.0L1614.5 605.0L1602.4 602.1L1588.8 599.4L1573.8 596.7L1557.5 594.2L1540.0 591.8L1521.2 589.6L1501.4 587.5ZM1481.1 304.4L1459.3 303.0L1436.6 301.7L1413.1 300.6L1389.0 299.6L1364.3 298.8L1339.2 298.2L1313.6 297.6L1287.9 297.3L1261.9 297.1L1235.9 297.1L1209.9 297.2L1184.0 297.5L1158.4 297.9L1133.0 298.5L1108.2 299.3L1083.8 300.2L1060.1 301.3L1037.0 302.5L1014.8 303.8L993.5 305.3L973.2 306.9L953.9 308.7L935.8 310.5L918.9 312.5L903.3 314.6L889.1 316.8L876.3 319.0L865.1 321.4L855.3 323.8L847.2 326.3L840.8 328.8L836.0 331.4L833.0 334.0L831.7 336.6L832.1 339.3L834.4 341.9L838.4 344.5L844.2 347.1L851.7 349.6L861.0 352.1L872.0 354.6L884.6 357.0L898.9 359.3L914.7 361.4L932.0 363.5L950.7 365.5L970.8 367.4L992.2 369.1L1014.7 370.7L1038.3 372.1L1062.9 373.4L1088.3 374.5L1114.4 375.4L1141.2 376.2L1168.4 376.8L1196.0 377.2L1223.8 377.4L1251.7 377.4L1279.6 377.3L1307.2 377.0L1334.6 376.4L1361.6 375.7L1388.0 374.9L1413.7 373.8L1438.6 372.6L1462.6 371.3L1485.6 369.8L1507.5 368.1L1528.1 366.3L1547.4 364.4L1565.3 362.3L1581.8 360.2L1596.7 357.9L1610.0 355.6L1621.7 353.2L1631.7 350.7L1639.9 348.1L1646.4 345.6L1651.2 343.0L1654.1 340.3L1655.3 337.7L1654.8 335.1L1652.4 332.5L1648.4 329.9L1642.6 327.3L1635.2 324.8L1626.1 322.4L1615.5 320.0L1603.4 317.7L1589.7 315.5L1574.7 313.4L1558.4 311.3L1540.7 309.4L1521.9 307.6L1502.0 306.0ZM1432.7 168.9L1415.3 167.9L1397.3 167.0L1378.6 166.3L1359.4 165.6L1339.8 165.0L1319.7 164.5L1299.4 164.2L1278.9 163.9L1258.2 163.8L1237.4 163.8L1216.7 163.9L1196.1 164.1L1175.6 164.4L1155.5 164.8L1135.6 165.3L1116.3 166.0L1097.4 166.7L1079.1 167.6L1061.4 168.5L1044.5 169.5L1028.4 170.7L1013.1 171.9L998.8 173.2L985.4 174.6L973.1 176.0L962.0 177.6L951.9 179.1L943.1 180.8L935.6 182.4L929.3 184.2L924.3 185.9L920.7 187.7L918.4 189.5L917.5 191.3L918.1 193.2L920.0 195.0L923.3 196.8L928.0 198.6L934.1 200.3L941.6 202.1L950.4 203.7L960.5 205.4L971.8 206.9L984.4 208.4L998.1 209.9L1013.0 211.2L1028.9 212.5L1045.8 213.7L1063.5 214.8L1082.1 215.7L1101.5 216.6L1121.5 217.4L1142.0 218.0L1163.1 218.5L1184.5 218.9L1206.2 219.2L1228.0 219.3L1249.9 219.4L1271.8 219.3L1293.6 219.0L1315.1 218.7L1336.3 218.2L1357.1 217.6L1377.3 216.9L1397.0 216.1L1415.9 215.2L1434.0 214.1L1451.3 213.0L1467.6 211.8L1482.9 210.4L1497.1 209.0L1510.1 207.6L1522.0 206.0L1532.6 204.4L1542.0 202.8L1550.0 201.0L1556.6 199.3L1561.9 197.5L1565.8 195.7L1568.3 193.9L1569.4 192.1L1569.1 190.3L1567.4 188.5L1564.4 186.7L1560.0 184.9L1554.2 183.2L1547.2 181.5L1538.9 179.8L1529.3 178.2L1518.6 176.7L1506.8 175.2L1493.9 173.8L1479.9 172.4L1465.1 171.2L1449.3 170.0Z" stroke="#000" stroke-opacity=".56" stroke-width=".85"/><path d="M1494.8 443.1L1471.7 441.4L1447.6 439.9L1422.8 438.6L1397.3 437.4L1371.2 436.5L1344.6 435.7L1317.6 435.1L1290.4 434.6L1262.9 434.4L1235.4 434.4L1207.9 434.5L1180.6 434.9L1153.5 435.4L1126.7 436.1L1100.4 437.0L1074.6 438.1L1049.5 439.3L1025.2 440.8L1001.7 442.4L979.1 444.2L957.6 446.1L937.2 448.2L918.0 450.4L900.1 452.7L883.5 455.2L868.5 457.8L854.9 460.5L842.9 463.3L832.6 466.2L824.0 469.1L817.1 472.1L812.0 475.2L808.7 478.3L807.3 481.4L807.7 484.6L810.0 487.7L814.2 490.8L820.3 493.9L828.2 497.0L838.0 499.9L849.6 502.9L862.9 505.7L878.0 508.4L894.7 511.1L913.1 513.6L932.9 515.9L954.2 518.1L976.9 520.2L1000.8 522.1L1025.8 523.8L1051.8 525.3L1078.8 526.6L1106.5 527.7L1134.9 528.7L1163.8 529.4L1193.1 529.9L1222.6 530.1L1252.2 530.2L1281.8 530.0L1311.2 529.6L1340.2 529.0L1368.8 528.2L1396.9 527.1L1424.1 525.9L1450.6 524.4L1476.0 522.8L1500.4 521.0L1523.6 519.0L1545.4 516.8L1565.9 514.5L1584.9 512.1L1602.3 509.5L1618.0 506.8L1632.1 504.0L1644.4 501.2L1655.0 498.2L1663.7 495.2L1670.5 492.1L1675.5 489.0L1678.6 485.9L1679.8 482.7L1679.1 479.6L1676.6 476.5L1672.2 473.4L1666.1 470.3L1658.2 467.4L1648.5 464.5L1637.2 461.6L1624.3 458.9L1609.9 456.2L1593.9 453.7L1576.6 451.3L1557.9 449.0L1538.0 446.9L1516.9 444.9Z" stroke="#000" stroke-width="3"/><g font-family="Liberation Sans, sans-serif"><text transform="translate(1468.8 484.7) skewY(3.3) scale(0.644 1.182)" font-size="100" fill="#666" stroke="#666" stroke-width="1.3" x="0" y="0">H</text></g><path d="M1494.8 443.1L1494.3 415.6L1492.8 388.4L1490.3 361.5L1486.7 335.1L1482.1 309.3L1476.5 284.1L1469.9 259.8L1462.4 236.2L1453.9 213.7L1444.5 192.2L1434.3 171.9L1423.2 152.8L1411.3 135.0L1398.7 118.6L1385.4 103.7L1371.4 90.3L1356.9 78.6L1341.8 68.5L1326.2 60.1L1310.2 53.5L1293.9 48.7L1277.3 45.7L1260.5 44.6L1243.5 45.4L1226.5 48.0L1209.5 52.5L1192.5 58.9L1175.8 67.1L1159.2 77.1L1143.0 88.9L1127.1 102.5L1111.7 117.8L1096.8 134.7L1082.6 153.2L1069.0 173.1L1056.1 194.5L1044.0 217.1L1032.8 241.0L1022.4 266.0L1013.1 291.9L1004.7 318.8L997.3 346.4L991.1 374.6L985.9 403.2L981.9 432.3L979.1 461.5L977.4 490.9L976.9 520.2L977.5 549.3L979.4 578.1L982.4 606.4L986.5 634.1L991.8 661.1L998.1 687.3L1005.6 712.5L1014.0 736.6L1023.4 759.5L1033.8 781.2L1045.1 801.5L1057.2 820.3L1070.0 837.6L1083.6 853.3L1097.9 867.3L1112.7 879.6L1128.0 890.1L1143.7 898.8L1159.9 905.7L1176.3 910.7L1192.9 913.8L1209.7 915.1L1226.6 914.5L1243.5 912.1L1260.3 907.9L1277.0 901.8L1293.5 894.0L1309.7 884.4L1325.6 873.2L1341.0 860.4L1356.0 846.0L1370.5 830.1L1384.4 812.8L1397.7 794.2L1410.3 774.3L1422.2 753.2L1433.3 731.0L1443.6 707.9L1453.0 683.8L1461.5 658.9L1469.1 633.3L1475.8 607.1L1481.5 580.4L1486.2 553.3L1489.9 525.9L1492.6 498.4L1494.2 470.7ZM900.1 452.7L900.7 425.0L902.8 397.5L906.3 370.4L911.2 343.7L917.5 317.5L925.2 291.9L934.3 267.2L944.6 243.2L956.3 220.3L969.2 198.4L983.2 177.6L998.4 158.0L1014.7 139.8L1032.0 123.0L1050.2 107.7L1069.3 93.9L1089.2 81.7L1109.8 71.1L1131.1 62.3L1152.8 55.3L1175.1 50.0L1197.6 46.6L1220.5 45.1L1243.5 45.4L1266.6 47.5L1289.6 51.6L1312.5 57.5L1335.2 65.3L1357.5 74.8L1379.4 86.2L1400.8 99.3L1421.5 114.1L1441.5 130.5L1460.7 148.5L1479.0 167.9L1496.3 188.8L1512.5 211.0L1527.5 234.3L1541.4 258.8L1553.9 284.3L1565.1 310.7L1574.9 337.8L1583.3 365.6L1590.2 393.8L1595.5 422.5L1599.3 451.4L1601.6 480.5L1602.3 509.5L1601.4 538.4L1598.9 567.0L1594.9 595.3L1589.4 622.9L1582.4 650.0L1573.9 676.2L1563.9 701.6L1552.6 725.9L1540.0 749.1L1526.1 771.2L1511.0 791.9L1494.8 811.2L1477.5 829.0L1459.3 845.3L1440.2 859.9L1420.3 872.9L1399.7 884.2L1378.4 893.6L1356.7 901.3L1334.5 907.2L1312.0 911.2L1289.3 913.4L1266.4 913.7L1243.5 912.1L1220.7 908.7L1198.0 903.5L1175.6 896.6L1153.5 887.8L1131.9 877.4L1110.8 865.4L1090.3 851.7L1070.5 836.5L1051.5 819.8L1033.3 801.7L1016.1 782.3L999.8 761.7L984.6 739.9L970.5 717.1L957.5 693.3L945.8 668.7L935.3 643.2L926.2 617.1L918.3 590.5L911.9 563.4L906.8 536.0L903.1 508.3L900.9 480.5ZM976.9 520.2L1494.8 443.1M1602.3 509.5L900.1 452.7M1243.5 912.1L1243.5 45.4" stroke="#000" stroke-width="3"/><path d="M1090.5 486.2L1093.5 485.5L1096.6 485.1L1099.7 484.8L1102.7 484.8L1105.8 485.1L1108.9 485.5L1111.9 486.2L1114.9 487.1L1117.8 488.2L1120.7 489.5L1123.4 491.0L1126.0 492.7L1128.5 494.6L1130.9 496.7L1133.1 498.9L1135.2 501.3L1137.1 503.9L1138.9 506.6L1140.4 509.4L1141.8 512.3L1142.9 515.3L1143.9 518.3L1144.6 521.5L1145.2 524.7L1145.5 527.9L1145.6 531.1L1145.5 534.3L1145.2 537.5L1144.6 540.7L1143.9 543.9L1142.9 546.9L1141.8 549.9L1140.4 552.8L1138.9 555.6L1137.1 558.3L1135.2 560.9L1133.1 563.3L1130.9 565.5L1128.5 567.6L1126.0 569.5L1123.4 571.2L1120.7 572.7L1117.8 574.0L1114.9 575.1M1063.4 555.7L1061.7 552.8L1060.3 549.7L1059.1 546.5L1058.1 543.2L1057.4 539.9L1056.9 536.5L1056.6 533.1L1056.6 529.7L1056.8 526.2" stroke="#ff5210" stroke-width="4.1"/><path d="M1057.0 526.3L1057.5 523.0L1058.2 519.7L1059.0 516.6L1060.1 513.5L1061.5 510.5L1063.0 507.6L1064.7 504.8L1066.6 502.1L1068.7 499.6L1070.9 497.3L1073.3 495.1L1075.8 493.1L1078.5 491.3L1081.3 489.7L1084.2 488.3L1087.1 487.2L1090.2 486.3L1093.3 485.5L1096.4 485.1L1099.6 484.8L1102.7 484.8" stroke="#3c3cff" stroke-width="3.9"/><circle cx="1060" cy="507.3" r="3" fill="#3c3cff"/><ellipse cx="1101.2" cy="531.1" rx="43.8" ry="45.7" stroke="#1cae1c" stroke-width=".8"/><circle cx="1101.2" cy="531.5" r="2" fill="#1cae1c"/><g font-family="Liberation Sans, sans-serif"><text transform="translate(961.2 563.3) skewY(5.2) scale(0.632 1.25)" font-size="100" fill="#000" stroke="#000" stroke-width="1.6" x="0" y="0">V</text><text transform="matrix(-0.78 0.11 0.88 0.087 1286.6 904.7)" font-size="100" fill="#484848" stroke="#484848" stroke-width="6" stroke-linejoin="miter" x="0" y="0">L</text><text transform="matrix(0.93 0 0.06 0.085 1216.5 52.2)" font-size="100" font-weight="bold" fill="#000" stroke="#000" stroke-width="16" stroke-linejoin="round" x="0" y="0">R</text></g></svg></div></div>
</div>
</body></html>
